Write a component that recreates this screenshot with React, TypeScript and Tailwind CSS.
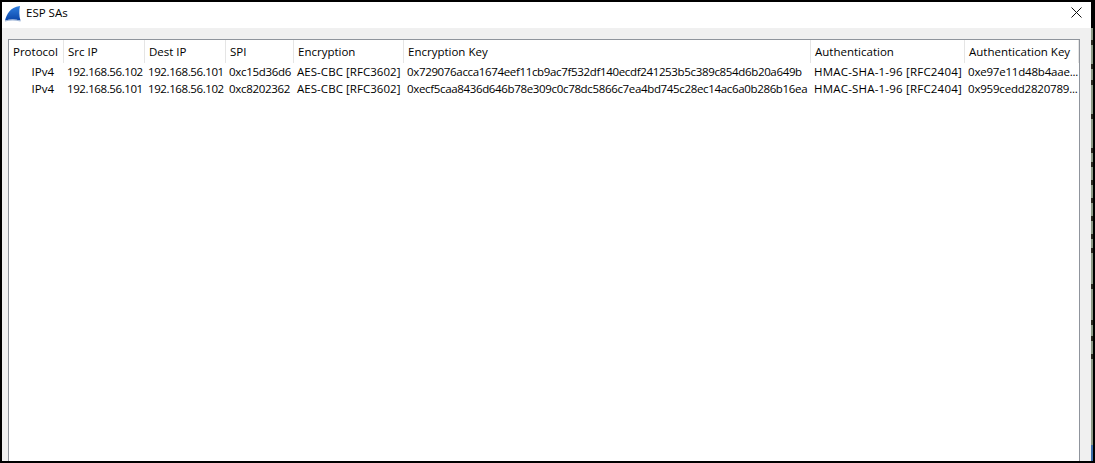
const cols = [
  { w: 55, label: "Protocol", t: "" },
  { w: 81, label: "Src IP", t: "tracking-[-0.4px]" },
  { w: 81, label: "Dest IP", t: "tracking-[-0.4px]" },
  { w: 68, label: "SPI", t: "tracking-[-0.3px]" },
  { w: 110, label: "Encryption", t: "tracking-[0.05px]" },
  { w: 407, label: "Encryption Key", t: "tracking-[-0.34px]" },
  { w: 154, label: "Authentication", t: "tracking-[0.2px]" },
  { w: 114, label: "Authentication Key", t: "tracking-[-0.2px]" },
];
const rows = [
  ["IPv4", "192.168.56.102", "192.168.56.101", "0xc15d36d6", "AES-CBC [RFC3602]", "0x729076acca1674eef11cb9ac7f532df140ecdf241253b5c389c854d6b20a649b", "HMAC-SHA-1-96 [RFC2404]", "0xe97e11d48b4aae..."],
  ["IPv4", "192.168.56.101", "192.168.56.102", "0xc8202362", "AES-CBC [RFC3602]", "0xecf5caa8436d646b78e309c0c78dc5866c7ea4bd745c28ec14ac6a0b286b16ea", "HMAC-SHA-1-96 [RFC2404]", "0x959cedd2820789..."],
];
const marks = [38, 62, 78, 112, 146, 160, 178, 196, 214, 232, 246, 282, 318, 334, 352];

export default function App() {
  return (
    <div className="flex h-[463px] w-[1095px] overflow-hidden bg-black py-[2px] pl-[2px] pr-[2px] text-[11.5px] text-black font-['Open_Sans','Noto_Sans',sans-serif]">
      <div className="flex h-full w-[1089px] shrink-0 flex-col bg-[#f0f0f0]">
        <div className="flex h-[26px] shrink-0 items-center bg-white pb-[5px] pl-[3px] pr-[9px]">
          <svg width="16" height="16" viewBox="0 0 16 16" className="mt-[3px] shrink-0">
            <defs>
              <linearGradient id="fin" x1="0" y1="0" x2="0" y2="1">
                <stop offset="0" stopColor="#2f7fe0" />
                <stop offset="1" stopColor="#0b45a8" />
              </linearGradient>
            </defs>
            <path d="M0 14.5 C2 8 4.5 1.5 15 0 C14 4 14 10 15.5 14.5 C10 13 5 13 0 14.5 Z" fill="url(#fin)" />
            <path d="M0 14.5 C5 13 10 13 15.5 14.5 L15.5 15.5 C10 14.2 5 14.2 0 15.5 Z" fill="#9db4d6" />
          </svg>
          <span className="ml-[5px]">ESP SAs</span>
          <svg width="11" height="11" viewBox="0 0 11 11" className="ml-auto" stroke="#111" strokeWidth="1">
            <path d="M0.5 0.5 L10.5 10.5 M10.5 0.5 L0.5 10.5" />
          </svg>
        </div>
        <div className="ml-[6px] mr-[11px] mt-[11px] flex-1 overflow-hidden border-x border-t border-[#8f949c] bg-white">
          <div className="flex h-[23px]">
            {cols.map((c) => (
              <div key={c.label} style={{ width: c.w }} className="flex shrink-0 items-center whitespace-nowrap border-r border-[#e5e5e5] pl-[4px]">
                {c.label}
              </div>
            ))}
          </div>
          {rows.map((r) => (
            <div key={r[2]} className="flex h-[17px]">
              {r.map((v, i) => (
                <div key={i} style={{ width: cols[i].w }} className={`flex shrink-0 items-center whitespace-nowrap ${cols[i].t} ${i === 0 ? "justify-end pr-[10px]" : "pl-[3px]"}`}>
                  {v}
                </div>
              ))}
            </div>
          ))}
        </div>
      </div>
      <svg width="2" height="459" viewBox="0 0 2 459" className="shrink-0">
        <rect x="0" y="26" width="2" height="417" fill="#8d9a86" />
        {marks.map((y) => (
          <rect key={y} x="0" y={y} width="2" height="5" fill="#2c2a20" />
        ))}
        <rect x="0" y="443" width="2" height="16" fill="#3d6ea8" />
      </svg>
    </div>
  );
}
